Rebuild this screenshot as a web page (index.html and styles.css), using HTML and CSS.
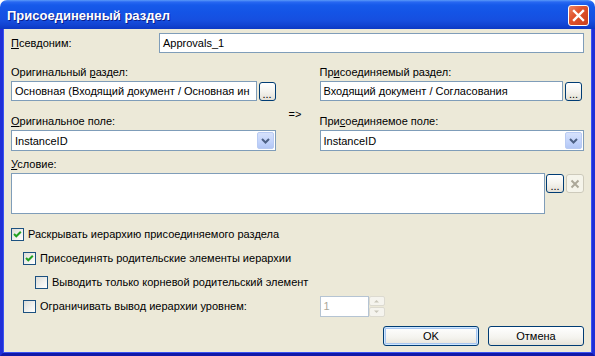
FILE: index.html
```html
<!DOCTYPE html>
<html lang="ru">
  <head>
    <meta charset="utf-8" />
    <title>Присоединенный раздел</title>
    <link rel="stylesheet" href="styles.css">
  </head>
  <body>
    <div class="window">
      <div class="titlebar">
        <span class="title">Присоединенный раздел</span>
        <button class="close" title="Закрыть">
          <svg width="21" height="21" viewBox="0 0 21 21">
            <path d="M6 6 L15 15 M15 6 L6 15" stroke="#fff" stroke-width="2.4" stroke-linecap="square" fill="none" />
          </svg>
        </button>
      </div>

      <div class="frame">
        <div class="client">
          <div class="alias-row">
            <label class="lbl"><u>П</u>севдоним:</label>
            <div class="edit"><span>Approvals_1</span></div>
          </div>

          <div class="pair">
            <label class="lbl sect">Оригинальный <u>р</u>аздел:</label>
            <span></span>
            <label class="lbl sect">Пр<u>и</u>соединяемый раздел:</label>

            <div class="picker">
              <div class="edit"><span>Основная (Входящий документ / Основная ин</span></div>
              <button class="dots">...</button>
            </div>
            <span></span>
            <div class="picker right">
              <div class="edit"><span>Входящий документ / Согласования</span></div>
              <button class="dots">...</button>
            </div>

            <label class="lbl field"><u>О</u>ригинальное поле:</label>
            <span class="arrow">=&gt;</span>
            <label class="lbl field">При<u>с</u>оединяемое поле:</label>

            <div class="combo">
              <span>InstanceID</span>
              <i class="drop"><svg width="17" height="17" viewBox="0 0 17 17"><polyline points="5,7 8.5,10.5 12,7" stroke="#4d6185" stroke-width="2" fill="none" /></svg></i>
            </div>
            <span></span>
            <div class="combo">
              <span>InstanceID</span>
              <i class="drop"><svg width="17" height="17" viewBox="0 0 17 17"><polyline points="5,7 8.5,10.5 12,7" stroke="#4d6185" stroke-width="2" fill="none" /></svg></i>
            </div>
          </div>

          <label class="lbl cond-lbl"><u>У</u>словие:</label>
          <div class="cond">
            <div class="memo"></div>
            <button class="dots small">...</button>
            <button class="clear" disabled>
              <svg width="10" height="10" viewBox="0 0 10 10"><path d="M1.5 1.5 L8.5 8.5 M8.5 1.5 L1.5 8.5" stroke="#aca899" stroke-width="2" fill="none" /></svg>
            </button>
          </div>

          <div class="checks">
            <div class="check-row">
              <span class="box on"><svg width="11" height="11" viewBox="0 0 11 11"><polyline points="2,5 4.3,7.3 8.8,2.8" stroke="#21a121" stroke-width="2" fill="none" /></svg></span>
              <span>Раскрывать иерархию присоединяемого раздела</span>
            </div>
            <div class="check-row lvl1">
              <span class="box on"><svg width="11" height="11" viewBox="0 0 11 11"><polyline points="2,5 4.3,7.3 8.8,2.8" stroke="#21a121" stroke-width="2" fill="none" /></svg></span>
              <span>Присоединять родительские элементы иерархии</span>
            </div>
            <div class="check-row lvl2">
              <span class="box"></span>
              <span>Выводить только корневой родительский элемент</span>
            </div>
            <div class="limit-row">
              <div class="check-row lvl1">
                <span class="box"></span>
                <span>Ограничивать вывод иерархии уровнем:</span>
              </div>
              <span></span>
              <div class="spin">
                <div class="spin-edit">1</div>
                <div class="spin-btns">
                  <i><svg width="7" height="4" viewBox="0 0 7 4"><path d="M1 3.5 L3.5 1 L6 3.5 Z" fill="#c9c7ba" /></svg></i>
                  <i><svg width="7" height="4" viewBox="0 0 7 4"><path d="M1 0.5 L3.5 3 L6 0.5 Z" fill="#c9c7ba" /></svg></i>
                </div>
              </div>
            </div>
          </div>

          <div class="actions">
            <button class="btn default">OK</button>
            <button class="btn">Отмена</button>
          </div>
        </div>
      </div>
    </div>
  </body>
</html>
```

FILE: styles.css
```css
* {
  padding: 0;
  margin: 0;
  box-sizing: border-box;
}
body {
  background: #ffffff;
  font-family: "Liberation Sans", Arial, sans-serif;
  font-size: 11px;
  color: #000;
}
u {
  text-decoration: underline;
  text-underline-offset: 1px;
}
button {
  font-family: inherit;
  font-size: 11px;
  color: #000;
}
.window {
  width: 595px;
  height: 356px;
  display: flex;
  flex-direction: column;
}
.titlebar {
  height: 29px;
  padding: 2px 6px 0 7px;
  display: flex;
  align-items: center;
  justify-content: space-between;
  border-radius: 7px 7px 0 0;
  background: linear-gradient(
    to bottom,
    #5a9af8 0,
    #2868f2 2px,
    #165aea 5px,
    #1454e6 12px,
    #164fe0 20px,
    #1244d2 25px,
    #0c38c4 29px
  );
}
.title {
  color: #fff;
  font-weight: bold;
  font-size: 13px;
  text-shadow: 1px 1px 0 #0a1e8c;
}
.close {
  width: 21px;
  height: 21px;
  border: 1px solid #fff;
  border-radius: 3px;
  background: linear-gradient(135deg, #ec8564 0, #e0532d 40%, #c9401c 100%);
  display: flex;
  align-items: center;
  justify-content: center;
}
.close svg {
  display: block;
  margin: -1px;
}
.frame {
  flex: 1;
  display: flex;
  border: 3px solid #1f2fd8;
  border-top: 0;
  border-bottom-color: #1018a8;
}
.client {
  flex: 1;
  background: #ece9d8;
  border-left: 1px solid #3a52f2;
  border-right: 1px solid #3a52f2;
  border-bottom: 1px solid #3a52f2;
  padding: 4px 7px 0 7px;
  display: flex;
  flex-direction: column;
}
.lbl {
  line-height: 13px;
  white-space: nowrap;
}
.edit,
.combo,
.memo,
.spin-edit {
  background: #fff;
  border: 1px solid #7f9db9;
}
.edit {
  height: 20px;
  padding: 0 3px;
  display: flex;
  align-items: center;
  overflow: hidden;
  white-space: nowrap;
}
.alias-row {
  display: grid;
  grid-template-columns: 148px 1fr;
  align-items: center;
}
.pair {
  margin-top: 13px;
  display: grid;
  grid-template-columns: 1fr 44px 1fr;
}
.sect {
  margin-bottom: 2px;
}
.picker {
  display: flex;
  align-items: center;
  gap: 2px;
  min-width: 0;
}
.picker .edit {
  flex: 1;
  min-width: 0;
}
.picker.right {
  margin-right: 2px;
}
.dots {
  width: 17px;
  height: 19px;
  flex: none;
  border: 1px solid #003c74;
  border-radius: 3px;
  background: linear-gradient(to bottom, #ffffff 0, #f4f3ee 50%, #e3e0d6 100%);
  line-height: 19px;
  padding-top: 2px;
}
.field {
  margin-top: 14px;
  margin-bottom: 2px;
}
.arrow {
  margin-top: 7px;
  padding-left: 13px;
  line-height: 13px;
}
.combo {
  height: 21px;
  padding: 0 1px 0 3px;
  display: flex;
  align-items: center;
  justify-content: space-between;
}
.drop {
  width: 17px;
  height: 17px;
  border: 1px solid #b9cbf3;
  border-radius: 2px;
  background: linear-gradient(to bottom, #d7e2fc 0, #c2d3fb 60%, #b3c7f5 100%);
}
.drop svg {
  display: block;
  margin: -1px;
}
.cond-lbl {
  margin-top: 7px;
  margin-bottom: 2px;
}
.cond {
  display: flex;
  align-items: flex-start;
}
.memo {
  flex: 1;
  height: 41px;
}
.dots.small {
  width: 18px;
  margin: 1px 0 0 1px;
}
.clear {
  width: 18px;
  height: 19px;
  margin: 1px 0 0 2px;
  border: 1px solid #cdcabb;
  border-radius: 3px;
  background: #f5f4ea;
  display: flex;
  align-items: center;
  justify-content: center;
}
.checks {
  margin-top: 8px;
}
.check-row {
  height: 24px;
  display: flex;
  align-items: center;
  gap: 4px;
  white-space: nowrap;
}
.lvl1 {
  padding-left: 12px;
}
.lvl2 {
  padding-left: 24px;
}
.box {
  width: 13px;
  height: 13px;
  flex: none;
  border: 1px solid #1c5180;
  background: linear-gradient(135deg, #dcdcd7 0, #f2f2ef 60%, #ffffff 100%);
}
.box svg {
  display: block;
}
.limit-row {
  display: grid;
  grid-template-columns: 1fr 44px 1fr;
  align-items: center;
}
.spin {
  display: flex;
  height: 21px;
}
.spin-edit {
  width: 49px;
  border-color: #b5c4d3;
  color: #aca899;
  padding-left: 3px;
  line-height: 19px;
}
.spin-btns {
  width: 16px;
  display: flex;
  flex-direction: column;
  gap: 1px;
}
.spin-btns i {
  flex: 1;
  border: 1px solid #dcdad0;
  border-radius: 2px;
  background: #f5f4ee;
  display: flex;
  align-items: center;
  justify-content: center;
}
.spin-btns svg {
  display: block;
}
.actions {
  margin-top: 8px;
  display: flex;
  justify-content: flex-end;
  gap: 9px;
}
.btn {
  width: 96px;
  height: 20px;
  border: 1px solid #003c74;
  border-radius: 3px;
  background: linear-gradient(to bottom, #ffffff 0, #f4f3ee 60%, #e6e3d8 100%);
}
.btn.default {
  box-shadow: inset 0 0 0 1px #cee7ff, inset 0 0 0 2px #a8c6f0;
}
```
